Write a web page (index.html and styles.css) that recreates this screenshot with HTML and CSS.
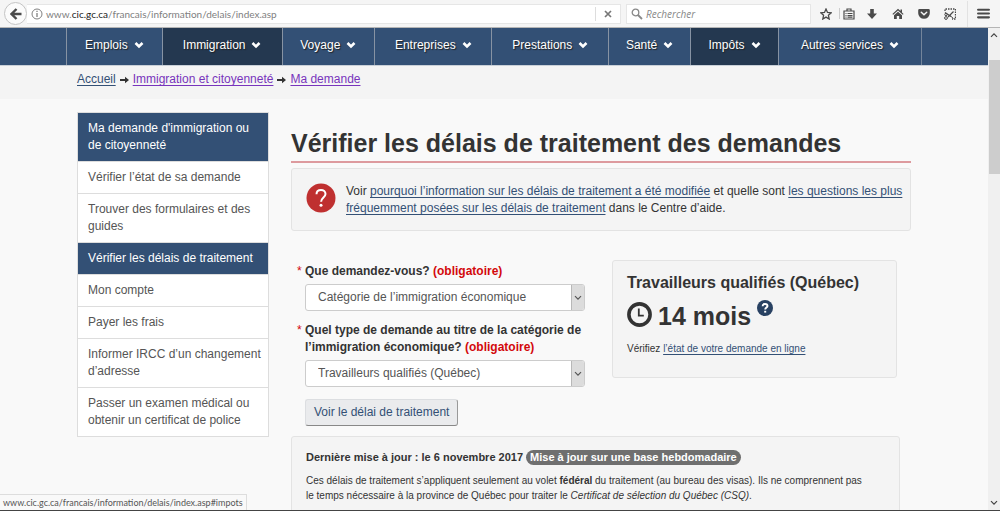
FILE: index.html
```html
<!DOCTYPE html>
<html lang="fr">
<head>
<meta charset="utf-8">
<title>Vérifier les délais de traitement des demandes</title>
<link rel="stylesheet" href="styles.css">
</head>
<body>
<svg class="defs" aria-hidden="true">
  <symbol id="chevron" viewBox="0 0 10 8"><path d="M1.500 2 5 5.500 8.500 2" fill="none" stroke="currentColor" stroke-width="2.600"/></symbol>
  <symbol id="thin-chevron" viewBox="0 0 8 6"><path d="M1 1.200 4 4.200 7 1.200" fill="none" stroke="currentColor" stroke-width="1.200"/></symbol>
  <symbol id="arrow" viewBox="0 0 9 8"><path d="M0 3h5V.8L9 4 5 7.200V5H0z" fill="currentColor"/></symbol>
</svg>

<header class="toolbar">
  <button class="back" aria-label="Précédent"><svg viewBox="0 0 12 12"><path d="M6.500 1 1.500 6l5 5M2 6h9.500" fill="none" stroke="currentColor" stroke-width="2.400"/></svg></button>
  <div class="address">
    <svg class="info" viewBox="0 0 12 12"><circle cx="6" cy="6" r="5" fill="none" stroke="currentColor"/><path d="M6 5v4M6 2.800v1.300" stroke="currentColor" stroke-width="1.300"/></svg>
    <span class="url">www.<b>cic.gc.ca</b>/francais/information/delais/index.asp</span>
    <button class="stop" aria-label="Arrêter"><svg viewBox="0 0 8 8"><path d="m1 1 6 6M7 1 1 7" stroke="currentColor" stroke-width="1.700"/></svg></button>
  </div>
  <label class="search">
    <svg viewBox="0 0 12 12"><circle cx="4.500" cy="4.500" r="3.300" fill="none" stroke="currentColor" stroke-width="1.300"/><path d="m7 7 4 4" stroke="currentColor" stroke-width="1.800"/></svg>
    <input type="text" placeholder="Rechercher" aria-label="Rechercher">
  </label>
  <div class="tools">
    <button aria-label="Marquer cette page"><svg viewBox="0 0 12 12"><path d="m6 1 1.500 3.400 3.700.4-2.800 2.500.8 3.700L6 9.100 2.800 11l.8-3.700L.8 4.800l3.700-.4z" fill="none" stroke="currentColor" stroke-width="1.300"/></svg></button>
    <button class="split" aria-label="Marque-pages"><svg viewBox="0 0 12 12"><path d="M1 3h10v8H1zM4 3V1h4v2M2.500 5.500h1M4.500 5.500h5M2.500 7.500h1M4.500 7.500h5M2.500 9.200h1M4.500 9.200h5" fill="none" stroke="currentColor" stroke-width="1.200"/></svg></button>
    <button aria-label="Téléchargements"><svg viewBox="0 0 12 12"><path d="M4.200 1h3.600v4.500H11L6 11 1 5.500h3.200z" fill="currentColor"/></svg></button>
    <button aria-label="Accueil"><svg viewBox="0 0 12 12"><path d="M6 .8 8.500 3V1.500H10v2.900l1.600 1.500-.8.9L6 2.500 1.200 6.800l-.8-.9z" fill="currentColor"/><path d="m6 3.800 4 3.500V11H7.200V8H4.800v3H2V7.300z" fill="currentColor"/></svg></button>
    <button aria-label="Pocket"><svg viewBox="0 0 12 12"><path d="M1.500 1h9q1.300 0 1.300 1.300V5.300a5.800 5.500 0 0 1-11.600 0V2.300Q.2 1 1.500 1z" fill="currentColor"/><path d="m3.300 4.300 2.700 2.500 2.700-2.500" fill="none" stroke="#f5f5f5" stroke-width="1.500" stroke-linecap="round"/></svg></button>
    <button aria-label="Capture"><svg viewBox="0 0 12 12"><path d="M1 3V1h10.500v10H8" fill="none" stroke="currentColor" stroke-width="1.300" stroke-dasharray="1.500 1"/><path d="m1 4.500 6 4M9.500 3.500 4 9" stroke="currentColor" stroke-width="1.200"/><circle cx="2" cy="10" r="1.400" fill="none" stroke="currentColor"/><circle cx="2" cy="6.500" r="1.200" fill="none" stroke="currentColor"/><path d="m6.500 8 3 2.500" stroke="currentColor"/></svg></button>
  </div>
  <button class="menu" aria-label="Menu"><svg viewBox="0 0 12 12"><path d="M1 2.500h10M1 6h10M1 9.500h10" stroke="currentColor" stroke-width="2" stroke-linecap="round"/></svg></button>
</header>

<div class="viewport">
  <div class="page">
    <nav class="nav-band" aria-label="Menu principal">
      <ul class="nav container">
        <li><a href="#emplois">Emplois<svg><use href="#chevron"/></svg></a></li>
        <li class="dark"><a href="#immigration">Immigration<svg><use href="#chevron"/></svg></a></li>
        <li><a href="#voyage">Voyage<svg><use href="#chevron"/></svg></a></li>
        <li><a href="#entreprises">Entreprises<svg><use href="#chevron"/></svg></a></li>
        <li><a href="#prestations">Prestations<svg><use href="#chevron"/></svg></a></li>
        <li><a href="#sante">Santé<svg><use href="#chevron"/></svg></a></li>
        <li class="dark"><a href="#impots">Impôts<svg><use href="#chevron"/></svg></a></li>
        <li><a href="#services">Autres services<svg><use href="#chevron"/></svg></a></li>
      </ul>
    </nav>
    <nav class="crumb-band" aria-label="Fil d’Ariane">
      <div class="crumbs container">
        <a href="#accueil">Accueil</a><svg><use href="#arrow"/></svg><a class="visited" href="#ic">Immigration et citoyenneté</a><svg><use href="#arrow"/></svg><a class="visited" href="#demande">Ma demande</a>
      </div>
    </nav>

    <div class="columns container">
      <nav class="side" aria-label="Ma demande">
        <a class="on" href="#s0">Ma demande d'immigration ou de citoyenneté</a>
        <a href="#s1">Vérifier l’état de sa demande</a>
        <a href="#s2">Trouver des formulaires et des guides</a>
        <a class="on" href="#s3">Vérifier les délais de traitement</a>
        <a href="#s4">Mon compte</a>
        <a href="#s5">Payer les frais</a>
        <a href="#s6">Informer IRCC d’un changement d’adresse</a>
        <a href="#s7">Passer un examen médical ou obtenir un certificat de police</a>
      </nav>

      <main>
        <h1>Vérifier les délais de traitement des demandes</h1>
        <section class="well notice">
          <svg viewBox="0 0 30 30"><circle cx="15" cy="15" r="14.500" fill="#bf3030"/><path d="M10.500 11.200C10.500 8.500 12.500 7 15 7s4.500 1.600 4.500 4.100c0 3.300-4.400 3.700-4.400 7.700" fill="none" stroke="#fff" stroke-width="2"/><circle cx="15" cy="22.200" r="1.500" fill="#fff"/></svg>
          <p>Voir <a href="#info">pourquoi l’information sur les délais de traitement a été modifiée</a> et quelle sont <a href="#faq">les questions les plus fréquemment posées sur les délais de traitement</a> dans le Centre d’aide.</p>
        </section>

        <div class="query">
          <form>
            <label for="what">Que demandez-vous? <strong>(obligatoire)</strong></label>
            <div class="select"><select id="what"><option>Catégorie de l’immigration économique</option></select><span><svg><use href="#thin-chevron"/></svg></span></div>
            <label for="type">Quel type de demande au titre de la catégorie de l’immigration économique? <strong>(obligatoire)</strong></label>
            <div class="select"><select id="type"><option>Travailleurs qualifiés (Québec)</option></select><span><svg><use href="#thin-chevron"/></svg></span></div>
            <button type="button" class="submit">Voir le délai de traitement</button>
          </form>
          <section class="well result">
            <h2>Travailleurs qualifiés (Québec)</h2>
            <div class="time">
              <svg class="clock" viewBox="0 0 25 25"><circle cx="12.500" cy="12.500" r="10.600" fill="none" stroke="#333" stroke-width="3.600"/><path d="M11.800 6.500v7.200h5" fill="none" stroke="#333" stroke-width="1.800"/></svg>
              <strong>14 mois</strong>
              <svg class="help" viewBox="0 0 16 16"><circle cx="8" cy="8" r="8" fill="#284162"/><path d="M5.600 6.300C5.600 4.700 6.600 4 8 4s2.500.8 2.500 2c0 1.600-2.300 1.600-2.300 3.600" fill="none" stroke="#fff" stroke-width="1.900"/><path d="M7.200 10.800h2v1.800h-2z" fill="#fff"/></svg>
            </div>
            <p>Vérifiez <a href="#etat">l’état de votre demande en ligne</a></p>
          </section>
        </div>

        <section class="well update">
          <p class="date"><b>Dernière mise à jour : le 6 novembre 2017</b> <span class="badge">Mise à jour sur une base hebdomadaire</span></p>
          <p>Ces délais de traitement s’appliquent seulement au volet <b>fédéral</b> du traitement (au bureau des visas). Ils ne comprennent pas le temps nécessaire à la province de Québec pour traiter le <i>Certificat de sélection du Québec (CSQ)</i>.</p>
        </section>
      </main>
    </div>
  </div>

  <div class="scrollbar" aria-hidden="true">
    <svg class="up"><use href="#thin-chevron"/></svg>
    <div class="track"><div class="thumb"></div></div>
    <svg><use href="#thin-chevron"/></svg>
  </div>
  <div class="status">www.cic.gc.ca/francais/information/delais/index.asp#impots</div>
</div>
</body>
</html>
```
FILE: styles.css
```css
* { box-sizing: border-box; }
html, body { height: 100%; }
body {
  margin: 0;
  display: flex;
  flex-direction: column;
  overflow: hidden;
  border-bottom: 1px solid #444;
  background: #f9f9f9;
  color: #333;
  font: 12px/17px "Liberation Sans", Arial, sans-serif;
}
h1, h2, p, ul { margin: 0; padding: 0; }
button, input, select { font: inherit; color: inherit; }
svg { display: block; flex: none; }
.defs { position: absolute; width: 0; height: 0; }
a { color: #335075; text-underline-offset: 2px; }

/* Browser toolbar */
.toolbar {
  flex: none;
  height: 28px;
  display: flex;
  align-items: center;
  padding: 0 1px 0 4px;
  background: #f5f5f5;
  border-bottom: 1px solid #b5b5b5;
  color: #4a4a4a;
  font: 10px/20px "Open Sans", "Noto Sans", sans-serif;
}
.toolbar button { border: 0; padding: 0; background: none; display: grid; place-items: center; }
.toolbar svg { width: 12px; height: 12px; }
.toolbar .back { width: 23px; height: 23px; flex: none; border: 1px solid #c4c4c4; border-radius: 50%; background: #fbfbfb; }
.address, .search { display: flex; align-items: center; height: 20px; background: #fff; border: 1px solid #e6e6e6; }
.address { flex: 1; border-left: 0; padding-left: 4px; color: #808080; }
.url { flex: 1; padding-left: 3px; white-space: nowrap; font-family: Lato, "Open Sans", sans-serif; }
.url b { font-weight: 400; color: #222; }
.address .stop { width: 25px; height: 14px; border-left: 1px solid #ddd; color: #777; }
.address .stop svg { width: 8px; height: 8px; }
.search { width: 185px; margin-left: 5px; padding-left: 4px; color: #888; }
.search input { flex: 1; min-width: 0; border: 0; padding: 0 3px; background: none; font-style: italic; outline: 0; }
.search input::placeholder { color: #888; }
.tools { display: flex; padding-left: 2px; }
.tools button { width: 26px; height: 20px; }
.tools .split { width: 20px; background: linear-gradient(#ccc, #ccc) 0 50% / 1px 11px no-repeat; }
.menu { width: 32px; height: 26px; margin-left: 4px; }
.toolbar .menu { border-left: 1px solid #e2e2e2; }
.toolbar .menu svg { width: 13px; height: 13px; }

/* Page frame */
.viewport { position: relative; flex: 1; min-height: 0; display: flex; }
.page { flex: 1; min-width: 0; overflow: hidden; }
.container { width: 87%; max-width: 856px; margin: 0 auto; }

.nav-band { background: #335075; border-bottom: 1px solid #c9d0d8; }
.nav { display: table; list-style: none; border-right: 1px solid #74859b; }
.nav li { display: table-cell; border-left: 1px solid #8793a3; }
.nav .dark { background: #243850; }
.nav a {
  display: flex;
  align-items: center;
  justify-content: center;
  gap: 6px;
  height: 37px;
  padding: 0 10px 3px;
  color: #fff;
  text-decoration: none;
  text-shadow: 1px 1px 1px #222;
  white-space: nowrap;
}
.nav svg { width: 10px; height: 8px; }

.crumb-band { background: #f4f4f4; }
.crumbs { display: flex; align-items: center; padding: 5px 11px 11px; }
.crumbs svg { width: 9px; height: 8px; margin: 0 4px; }
.crumbs .visited { color: #7834bc; }

.columns { display: grid; grid-template-columns: 192px minmax(0, 1fr); gap: 22px; align-items: start; padding: 13px 11px 0; }
.side { border: 1px solid #ddd; border-bottom: 0; background: #fff; }
.side a { display: block; padding: 7px 4px 7px 10px; border-bottom: 1px solid #ddd; color: #555; text-decoration: none; }
.side .on { background: #335075; color: #fff; }

h1 { padding: 16px 0 2px; border-bottom: 2px solid #dd9a9e; font-size: 25px; line-height: 31px; white-space: nowrap; }
.well { background: #f4f4f4; border: 1px solid #e3e3e3; border-radius: 3px; }
.notice { display: flex; gap: 10px; margin-top: 5px; padding: 14px 4px 13px 14px; }
.notice svg { width: 30px; height: 30px; }

.query { display: grid; grid-template-columns: 280px 285px; gap: 27px; align-items: start; padding: 29px 14px 0 14px; }
.query label { position: relative; display: block; padding: 3px 0 4px; font-weight: 700; }
.query label::before { content: "*"; position: absolute; left: -8px; color: #d3080c; font-weight: 400; }
.query strong { color: #d3080c; }
.select { display: flex; height: 27px; margin-bottom: 8px; border: 1px solid #ccc; border-radius: 3px; background: #fff; overflow: hidden; }
.select select { appearance: none; flex: 1; min-width: 0; border: 0; padding: 0 12px; background: none; color: #555; }
.select span { width: 13px; display: grid; place-items: center; background: #dcdcdc; border: 1px solid #b8b8b8; border-width: 0 0 0 1px; color: #555; }
.select svg, .scrollbar svg { width: 8px; height: 6px; }
.query .submit { height: 27px; margin-top: 4px; padding: 0 8px; border: 1px solid #dcdee1; border-right-color: #999; border-bottom-color: #888; border-radius: 3px; background: #eaebed; color: #335075; }
.result { padding: 12px 14px 20px; }
.result h2 { font-size: 16px; line-height: 20px; white-space: nowrap; }
.time { display: flex; align-items: center; gap: 6px; height: 42px; }
.query .time strong { color: #333; font-size: 25px; line-height: 30px; padding-top: 3px; }
.clock { width: 25px; height: 25px; }
.help { width: 16px; height: 16px; align-self: flex-start; margin-top: 7px; }
.result p { padding-top: 5px; font-size: 10px; }
.update { margin: 10px 11px 0 0; padding: 13px 28px 13px 14px; font-size: 10px; line-height: 15px; }
.update p { margin-bottom: 8px; }
.update .date { font-size: 11px; }
.badge { display: inline-block; padding: 0 4px; border-radius: 8px; background: #6f6f6f; color: #fff; font-weight: 700; }

.scrollbar { flex: none; width: 12px; display: flex; flex-direction: column; align-items: center; padding: 4px 0; background: #f0f0f0; color: #444; }
.scrollbar .up { transform: rotate(180deg); }
.track { flex: 1; width: 100%; padding: 22px 0 0 1px; }
.thumb { height: 26%; background: #cdcdcd; }
.status { position: absolute; left: 0; bottom: 0; padding: 0 3px; border: 1px solid #ddd; border-width: 1px 1px 0 0; background: #f9f9f9; color: #555; font: 9px/15px Lato, "Open Sans", sans-serif; }
```
